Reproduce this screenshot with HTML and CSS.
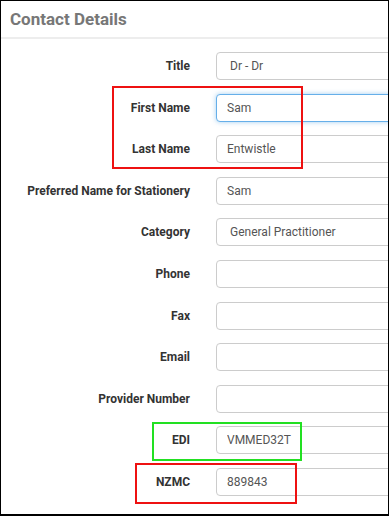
FILE: index.html
```html
<!DOCTYPE html>
<html lang="en">
<head>
    <meta charset="UTF-8">
    <meta name="viewport" content="width=device-width, initial-scale=1.0">
    <title>Contact Details</title>
    <link rel="stylesheet" href="styles.css">
</head>
<body>

<div class="contact-panel">
    <div class="panel-header">
        <h2 class="panel-title">Contact Details</h2>
    </div>

    <form class="contact-form">
        <div class="form-row">
            <label class="form-label">Title</label>
            <select class="form-control form-select"><option>Dr - Dr</option></select>
        </div>
        <div class="form-row">
            <label class="form-label">First Name</label>
            <input class="form-control is-focused" type="text" value="Sam">
        </div>
        <div class="form-row">
            <label class="form-label">Last Name</label>
            <input class="form-control" type="text" value="Entwistle">
        </div>
        <div class="form-row">
            <label class="form-label">Preferred Name for Stationery</label>
            <input class="form-control" type="text" value="Sam">
        </div>
        <div class="form-row">
            <label class="form-label">Category</label>
            <select class="form-control form-select"><option>General Practitioner</option></select>
        </div>
        <div class="form-row">
            <label class="form-label">Phone</label>
            <input class="form-control" type="text" value="">
        </div>
        <div class="form-row">
            <label class="form-label">Fax</label>
            <input class="form-control" type="text" value="">
        </div>
        <div class="form-row">
            <label class="form-label">Email</label>
            <input class="form-control" type="text" value="">
        </div>
        <div class="form-row">
            <label class="form-label">Provider Number</label>
            <input class="form-control" type="text" value="">
        </div>
        <div class="form-row">
            <label class="form-label">EDI</label>
            <input class="form-control" type="text" value="VMMED32T">
        </div>
        <div class="form-row">
            <label class="form-label">NZMC</label>
            <input class="form-control" type="text" value="889843">
        </div>
    </form>

    <!-- review highlights -->
    <div class="highlight highlight-red highlight-names"></div>
    <div class="highlight highlight-green highlight-edi"></div>
    <div class="highlight highlight-red highlight-nzmc"></div>
</div>

</body>
</html>
```

FILE: styles.css
```css
body {
    margin: 0;
    padding: 0;
    background: #fff;
    font-family: 'Roboto', 'Liberation Sans', sans-serif;
}

.contact-panel {
    position: relative;
    width: 389px;
    height: 516px;
    box-sizing: border-box;
    border-top: 1px solid #000;
    border-left: 1px solid #000;
    border-right: 1px solid #000;
    border-bottom: 2px solid #000;
    background: #fff;
    overflow: hidden;
}

.panel-header {
    height: 36px;
    border-bottom: 2px solid #ededed;
    padding-left: 9px;
    display: flex;
    align-items: center;
}

.panel-title {
    margin: 0;
    font-size: 17px;
    font-weight: bold;
    color: #777;
}

.contact-form {
    display: flex;
    flex-direction: column;
    gap: 13.6px;
    padding-top: 13px;
}

.form-row {
    display: flex;
    align-items: center;
    gap: 26px;
}

.form-label {
    width: 189px;
    flex-shrink: 0;
    text-align: right;
    font-size: 12px;
    font-weight: bold;
    color: #333;
}

.form-control {
    width: 260px;
    height: 28px;
    flex-shrink: 0;
    box-sizing: border-box;
    padding: 0 10px;
    border: 1px solid #ccc;
    border-radius: 4px;
    background: #fff;
    font-family: 'Roboto', 'Liberation Sans', sans-serif;
    font-size: 12px;
    color: #555;
    outline: none;
}

.form-select {
    -webkit-appearance: none;
    appearance: none;
    padding-left: 13px;
}

.form-control.is-focused {
    border-color: #66afe9;
    box-shadow: 0 0 5px rgba(102, 175, 233, 0.6);
}

.highlight {
    position: absolute;
    box-sizing: border-box;
    border: 2px solid;
}

.highlight-red {
    border-color: #ee1111;
}

.highlight-green {
    border-color: #22e022;
}

.highlight-names {
    left: 111px;
    top: 85px;
    width: 191px;
    height: 83px;
}

.highlight-edi {
    left: 151px;
    top: 421px;
    width: 150px;
    height: 39px;
}

.highlight-nzmc {
    left: 134px;
    top: 462px;
    width: 162px;
    height: 41px;
}
```
